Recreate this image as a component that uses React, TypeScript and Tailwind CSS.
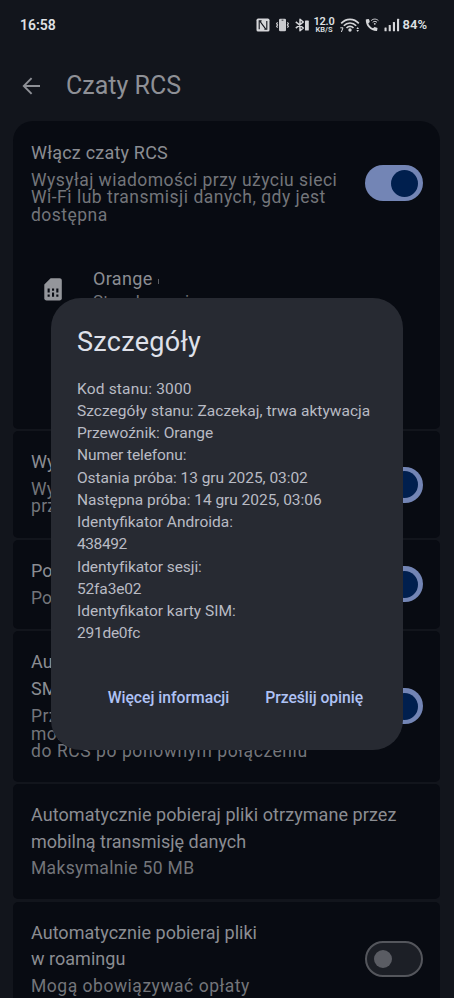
import type { ReactNode } from "react";

type RowProps = {
    children: ReactNode;
    className: string;
    action?: ReactNode;
};

const details = [
    { text: "Kod stanu: 3000", tracking: "tracking-[0.18px]" },
    { text: "Szczegóły stanu: Zaczekaj, trwa aktywacja", tracking: "tracking-[0.04px]" },
    { text: "Przewoźnik: Orange", tracking: "tracking-[0px]" },
    { text: "Numer telefonu:", tracking: "tracking-[-0.1px]" },
    { text: "Ostania próba: 13 gru 2025, 03:02", tracking: "tracking-[-0.04px]" },
    { text: "Następna próba: 14 gru 2025, 03:06", tracking: "tracking-[-0.03px]" },
    { text: "Identyfikator Androida:", tracking: "tracking-[0px]" },
    { text: "438492", tracking: "tracking-[-0.4px]" },
    { text: "Identyfikator sesji:", tracking: "tracking-[-0.06px]" },
    { text: "52fa3e02", tracking: "tracking-[-0.15px]" },
    { text: "Identyfikator karty SIM:", tracking: "tracking-[0px]" },
    { text: "291de0fc", tracking: "tracking-[-0.25px]" },
];

function NfcIcon() {
    return (
        <svg width="14" height="14" viewBox="0 0 14 14" fill="none">
            <rect x="0.5" y="0.6" width="13" height="13" rx="1.6" fill="#d5d6d9" />
            <path d="M5.6 2.9H3.2V11.2M4.2 3.6L9.6 10.8M8.4 11.2H10.8V2.9" stroke="#12151c" strokeWidth="1.1" />
        </svg>
    );
}

function VibrateIcon() {
    return (
        <svg width="15" height="14" viewBox="0 0 15 14" fill="none" stroke="#d5d6d9" strokeWidth="1.1">
            <rect x="4" y="0.8" width="7" height="12.4" rx="1.3" fill="#c9cace" stroke="none" />
            <path d="M6.6 2.2h1.8" stroke="#12151c" strokeWidth="0.8" />
            <path d="M2.6 4.4L1.6 5.7L2.6 7L1.6 8.3L2.6 9.6M12.4 4.4L13.4 5.7L12.4 7L13.4 8.3L12.4 9.6" />
        </svg>
    );
}

function BluetoothIcon() {
    return (
        <svg width="15" height="14" viewBox="0 0 15 14" fill="none" stroke="#d5d6d9" strokeWidth="1.5">
            <path d="M0.8 3.8L8.3 10L5 12.8V1.2L8.3 4L0.8 10.2" strokeLinejoin="round" />
            <rect x="10" y="2.6" width="3.8" height="10" rx="0.6" fill="#d5d6d9" stroke="none" />
        </svg>
    );
}

function WifiIcon() {
    return (
        <svg width="20" height="16" viewBox="0 0 20 16" fill="none" stroke="#d5d6d9" strokeWidth="1.6">
            <path d="M1.2 6.4C6 1 14 1 18.8 6.4M3.8 8.8C7.2 5 12.8 5 16.2 8.8M6.5 11C8.5 8.8 11.5 8.8 13.5 11" />
            <circle cx="10" cy="13" r="1.7" fill="#d5d6d9" stroke="none" />
            <path d="M0.3 10.8H3L1.4 15" strokeWidth="1" />
            <path d="M16.4 11.9L17.7 10L19 11.9ZM16.4 13.1L17.7 15L19 13.1Z" fill="#d5d6d9" stroke="none" />
        </svg>
    );
}

function CallIcon() {
    return (
        <svg width="14" height="14" viewBox="0 0 14 14" fill="none">
            <path
                d="M0.8 1.6L3.2 1.1C3.7 1 4.1 1.3 4.2 1.7L4.8 4.1L3.3 5.5C4.2 7.6 5.8 9.3 8 10.3L9.5 8.9L12 9.7C12.4 9.8 12.6 10.2 12.5 10.6L12 13.1C5.6 13.3 0.5 8 0.8 1.6Z"
                fill="#d5d6d9"
            />
            <path d="M6.2 2.6C8.2 0.6 11.3 0.6 13.4 2.6M7.7 4.3C9 3.1 10.7 3.1 12 4.3" stroke="#d5d6d9" strokeWidth="1" />
            <circle cx="9.8" cy="5.8" r="0.9" fill="#d5d6d9" />
        </svg>
    );
}

function SignalIcon() {
    return (
        <svg width="16" height="14" viewBox="0 0 16 14" fill="#d5d6d9">
            <rect x="0.5" y="9.5" width="2.1" height="3.7" rx="0.5" />
            <rect x="4.7" y="7" width="2.1" height="6.2" rx="0.5" />
            <rect x="8.9" y="4" width="2.1" height="9.2" rx="0.5" />
            <rect x="13" y="0.8" width="2.1" height="12.4" rx="0.5" />
        </svg>
    );
}

function SimIcon() {
    return (
        <svg width="18" height="23" viewBox="0 0 18 23">
            <path d="M6.6 0.3H15.6C16.9 0.3 17.8 1.2 17.8 2.5V20.2C17.8 21.5 16.9 22.4 15.6 22.4H2.5C1.2 22.4 0.3 21.5 0.3 20.2V6.6Z" fill="#94969b" />
            <path
                d="M3.6 10.6H5.7V14.4H3.6ZM3.6 16.5H5.7V18.8H3.6ZM8 10.6H10.1V12.7H8ZM8 14.6H10.1V18.8H8ZM12.3 10.6H14.4V14.4H12.3ZM12.3 16.5H14.4V18.8H12.3Z"
                fill="#080b12"
            />
        </svg>
    );
}

function Switch({ on = false }: { on?: boolean }) {
    if (on) {
        return (
            <div className="flex h-9 w-[58px] shrink-0 items-center justify-end rounded-full bg-[#7385b5] pr-[5px]">
                <span className="size-[27px] rounded-full bg-[#001f4e]" />
            </div>
        );
    }
    return (
        <div className="flex h-9 w-[58px] shrink-0 items-center rounded-full border-2 border-[#54565c] bg-[#1c1f26] pl-[7px]">
            <span className="size-[18px] rounded-full bg-[#5a5c63]" />
        </div>
    );
}

function Row({ children, className, action }: RowProps) {
    return (
        <section className={`flex shrink-0 bg-[#080b12] pr-[17px] pl-[18px] ${className}`}>
            <div className="min-w-0 flex-1 whitespace-nowrap">{children}</div>
            {action}
        </section>
    );
}

function StatusBar() {
    return (
        <div className="flex h-[50px] items-center pr-[27px] pl-5 text-[#dfe0e3]">
            <span className="text-[14px] font-semibold">16:58</span>
            <div className="ml-auto flex items-center">
                <NfcIcon />
                <div className="ml-[5px]"><VibrateIcon /></div>
                <div className="ml-[5px]"><BluetoothIcon /></div>
                <div className="ml-1 flex w-[21px] flex-col items-center font-semibold">
                    <span className="text-[11px] leading-[8px] tracking-[-0.2px]">12.0</span>
                    <span className="text-[7.5px] leading-[7px]">KB/S</span>
                </div>
                <div className="ml-[5px]"><WifiIcon /></div>
                <div className="ml-[5px]"><CallIcon /></div>
                <div className="ml-[5px]"><SignalIcon /></div>
                <span className="ml-[3px] text-[13px] font-semibold">84%</span>
            </div>
        </div>
    );
}

export default function App() {
    return (
        <div className="relative h-[998px] w-[454px] overflow-hidden bg-[#12151c] font-['Roboto',sans-serif]">
            <StatusBar />
            <header className="flex h-[71px] items-center pl-[22px] text-[#8e9096]">
                <svg width="19" height="18" viewBox="0 0 19 18" fill="none" stroke="currentColor" strokeWidth="1.9">
                    <path d="M18 9H1.8M9.6 1.2L1.8 9L9.6 16.8" />
                </svg>
                <span className="ml-[25px] text-[25px]">Czaty RCS</span>
            </header>

            <main className="flex flex-col gap-[2.5px] pr-[14px] pl-[13px]">
                <Row className="h-[307.5px] rounded-t-[20px] rounded-b-[5px] pt-[19px]" action={<div className="pt-[25px]"><Switch on /></div>}>
                    <p className="text-[18px] leading-[26px] tracking-[0.2px] text-[#8b8d92]">Włącz czaty RCS</p>
                    <div className="mt-[5.5px] text-[17.5px] leading-[17.5px] text-[#73757a]">
                        <p className="tracking-[0.46px]">Wysyłaj wiadomości przy użyciu sieci</p>
                        <p className="tracking-[0.5px]">Wi-Fi lub transmisji danych, gdy jest</p>
                        <p className="tracking-[0.48px]">dostępna</p>
                    </div>
                    <div className="mt-[42px] flex pl-[13px]">
                        <div className="pt-[12px]"><SimIcon /></div>
                        <div className="ml-[31px]">
                            <p className="flex items-center text-[18px] leading-[26px] tracking-[0.35px] text-[#8b8d92]">
                                Orange
                                <span className="mt-1 ml-[5px] h-[5px] w-px bg-[#5b5d62]" />
                            </p>
                            <p className="text-[17px] leading-[18px] text-[#73757a]">Stan: łączenie</p>
                        </div>
                    </div>
                </Row>
                <Row className="h-[106.5px] rounded-[5px] pt-[18px]" action={<div className="pt-[17.5px]"><Switch on /></div>}>
                    <p className="text-[18px] leading-[26px] text-[#8b8d92]">Wysyłaj</p>
                    <div className="mt-[5.5px] text-[17.5px] leading-[17.5px] tracking-[0.3px] text-[#73757a]">
                        <p>Wysyłaj</p>
                        <p>przez</p>
                    </div>
                </Row>
                <Row className="h-[88.5px] rounded-[5px] pt-[18px]" action={<div className="pt-[8px]"><Switch on /></div>}>
                    <p className="text-[18px] leading-[26.5px] text-[#8b8d92]">Pokazuj</p>
                    <p className="text-[17.5px] leading-[27px] text-[#73757a]">Pokazuj</p>
                </Row>
                <Row className="h-[150.5px] rounded-[5px] pt-[18px]" action={<div className="pt-[39px]"><Switch on /></div>}>
                    <p className="text-[18px] leading-[26.5px] text-[#8b8d92]">Automatycznie<br />SMS</p>
                    <div className="mt-[6px] text-[17.5px] leading-[17.5px] text-[#73757a]">
                        <p className="tracking-[0.45px]">Przesyłaj</p>
                        <p className="tracking-[0.45px]">mobilne</p>
                        <p className="tracking-[0.57px]">do RCS po ponownym połączeniu</p>
                    </div>
                </Row>
                <Row className="h-[115px] rounded-[5px] pt-[18px]">
                    <div className="text-[18px] leading-[26.5px] text-[#8b8d92]">
                        <p className="tracking-[0.07px]">Automatycznie pobieraj pliki otrzymane przez</p>
                        <p>mobilną transmisję danych</p>
                    </div>
                    <p className="text-[17.5px] leading-[27px] tracking-[0.33px] text-[#73757a]">Maksymalnie 50 MB</p>
                </Row>
                <Row className="h-[115px] rounded-[5px] pt-[18px]" action={<div className="pt-[21px]"><Switch /></div>}>
                    <p className="text-[18px] leading-[26.5px] tracking-[0.03px] text-[#8b8d92]">Automatycznie pobieraj pliki<br />w roamingu</p>
                    <p className="text-[17.5px] leading-[27px] tracking-[0.52px] text-[#73757a]">Mogą obowiązywać opłaty</p>
                </Row>
            </main>

            <div className="absolute top-[298px] left-[51px] h-[452px] w-[352px] rounded-[30px] bg-[#272a32] px-[26px] pt-[26px]">
                <h2 className="text-[27px] leading-9 tracking-[0.3px] text-[#dfe1ea]">Szczegóły</h2>
                <div className="mt-[17.5px] text-[15.5px] leading-[22.27px] text-[#b9bbc4]">
                    {details.map((d) => (
                        <p key={d.text} className={`whitespace-nowrap ${d.tracking}`}>{d.text}</p>
                    ))}
                </div>
                <div className="mt-[41px] flex justify-end gap-9 pr-[14px] text-[15.7px] leading-6 font-medium whitespace-nowrap text-[#afc2f5]">
                    <button>Więcej informacji</button>
                    <button className="tracking-[-0.05px]">Prześlij opinię</button>
                </div>
            </div>
        </div>
    );
}
